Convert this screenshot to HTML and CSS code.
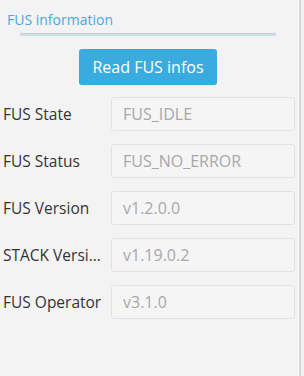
FILE: index.html
```html
<!DOCTYPE html>
<html lang="en">
<head>
  <meta charset="UTF-8" />
  <title>FUS information</title>
  <link rel="stylesheet" href="styles.css">
</head>
<body>
  <div class="panel">
    <h2 class="title">FUS information</h2>
    <div class="title-line"></div>

    <button class="read-btn">Read FUS infos</button>

    <div class="row">
      <label>FUS State</label>
      <div class="field">FUS_IDLE</div>
    </div>
    <div class="row">
      <label>FUS Status</label>
      <div class="field">FUS_NO_ERROR</div>
    </div>
    <div class="row">
      <label>FUS Version</label>
      <div class="field">v1.2.0.0</div>
    </div>
    <div class="row">
      <label>STACK Version</label>
      <div class="field">v1.19.0.2</div>
    </div>
    <div class="row">
      <label>FUS Operator</label>
      <div class="field">v3.1.0</div>
    </div>
  </div>
</body>
</html>
```

FILE: styles.css
```css
html, body {
  margin: 0;
  padding: 0;
  height: 100%;
  background: #f3f3f3;
}
body {
  font-family: "Open Sans", Arial, sans-serif;
}
.panel {
  width: 301px;
  height: 100%;
  box-sizing: border-box;
  border-right: 2px solid #d6d6d6;
  box-shadow: inset -1px 0 0 #f8f8f8;
}
.title {
  margin: 0;
  padding: 11px 0 0 7px;
  font-size: 14px;
  font-weight: normal;
  color: #4aa8df;
  line-height: 18px;
}
.title-line {
  margin: 4px 0 0 20px;
  width: 256px;
  height: 2px;
  border-top: 1px solid #cdcdcd;
  background: #c2e2f1;
}
.read-btn {
  display: block;
  margin: 13px 0 0 79px;
  width: 138px;
  height: 36px;
  padding: 0;
  background: #3aabde;
  border: none;
  border-radius: 3px;
  color: #fff;
  font-family: inherit;
  font-size: 16px;
  cursor: pointer;
}
.row {
  display: flex;
  align-items: center;
  margin-top: 12px;
}
.row + .row {
  margin-top: 13px;
}
.row label {
  width: 106px;
  padding-left: 3px;
  box-sizing: border-box;
  white-space: nowrap;
  overflow: hidden;
  text-overflow: ellipsis;
  font-size: 15.5px;
  color: #333;
}
.field {
  margin-left: 5px;
  width: 184px;
  height: 34px;
  box-sizing: border-box;
  padding-left: 11px;
  line-height: 32px;
  background: #f5f5f5;
  border: 1px solid #e2e2e2;
  border-radius: 3px;
  font-size: 16px;
  color: #a8a8a8;
}
```
